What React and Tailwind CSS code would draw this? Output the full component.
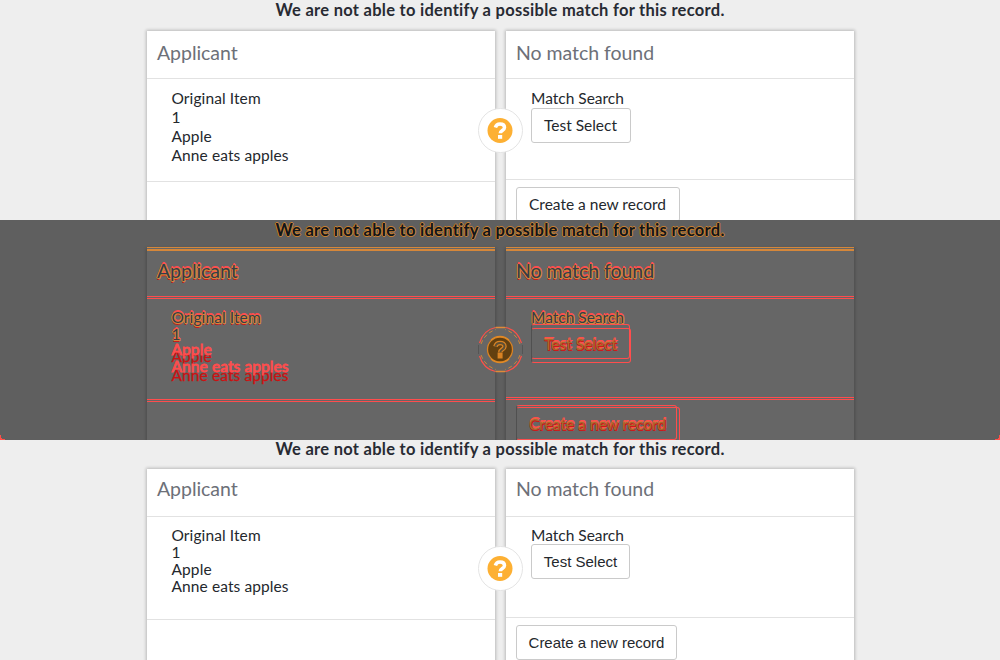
const sans = "font-[Lato,'Noto_Sans',sans-serif]";

const looks = {
  before: {
    bg: "bg-[#eeeeee]", title: "h-[21px] leading-[21px]", cards: "mt-[10px]", rows: "leading-[19px] pt-[10px]",
    head: "h-[47px] leading-[43px]", btn: sans + " text-[15.5px]", test: "w-[100px] pb-px pr-px", create: "w-[164px] pt-px pr-px", badge: "top-[108px]",
  },
  after: {
    bg: "bg-[#eeeeee]", title: "h-[18px] leading-[18px]", cards: "mt-[11px]", rows: "leading-[17px] pt-[10px]",
    head: "h-[47px] leading-[39px]", btn: "font-['Liberation_Sans',sans-serif] text-[15px]", test: "w-[99px]", create: "w-[161px] pt-px", badge: "top-[106px]",
  },
};

function Question({ diff }) {
  const hook = "M17.4 19.5c.6-2.4 2.2-3.6 4.6-3.6 2.7 0 4.5 1.4 4.5 3.5 0 3.1-4.2 3-4.2 5.8";
  if (diff) {
    return (
      <svg className="block" width="45" height="47" viewBox="0 0 45 47">
        <circle cx="22.5" cy="22.5" r="22" fill="#666666" fillOpacity="0.85" />
        <circle cx="22.5" cy="24.5" r="22" fill="#666666" />
        <g fill="none">
          <path d="M1.5 17C4 9 10 3 17.5 1.5M43.5 17C41 9 35 3 27.5 1.5M1.5 30C4 38 10 44 17.5 45.5M43.5 30C41 38 35 44 27.5 45.5" stroke="#ff5048" strokeWidth="1.2" />
          <path d="M3 18C5.500 11 11 5.500 18 3.500M42 18C39.500 11 34 5.500 27 3.500M3 29C5.500 36 11 41.500 18 43.500M42 29C39.500 36 34 41.500 27 43.500" stroke="#d08638" strokeDasharray="4 3" />
          <path d="M17.500 1.500h10M17.500 45.500h10" stroke="#e08a38" strokeWidth="1.500" />
          <path d="M.5 19v9M44.500 19v9" stroke="#555" />
        </g>
        <circle cx="22" cy="23.500" r="12.500" fill="#634010" stroke="#d98324" strokeWidth="1.300" />
        <path d="M13 14a13 13 0 0 1 18 0M13 33a13 13 0 0 0 18 0" fill="none" stroke="#e28a25" strokeWidth="1.200" />
        <path transform="translate(0 1)" d={hook} fill="none" stroke="#d98324" strokeWidth="4.500" />
        <path d="M19.600 26.500h5v6h-5z" fill="#d98324" />
        <path transform="translate(0 1)" d={hook} fill="none" stroke="#5e5036" strokeWidth="2" />
      </svg>
    );
  }
  return (
    <svg className="block" width="45" height="45" viewBox="0 0 45 45">
      <circle cx="22.5" cy="22.5" r="22" fill="#ffffff" stroke="#e4e4e4" />
      <circle cx="22" cy="22.5" r="12.5" fill="#fdb033" />
      <path d={hook} fill="none" stroke="#fff" strokeWidth="3.5" />
      <path d="M20 27h4.200v3.800H20z" fill="#fff" />
    </svg>
  );
}

function Snapshot({ kind }) {
  const k = looks[kind];
  const row = "text-[15.5px] text-[#24282d]";
  return (
    <section className={`relative h-[220px] overflow-hidden whitespace-nowrap ${sans} ${k.bg}`}>
      <h2 className={`text-center text-[16.5px] font-bold tracking-[0.28px] text-[#282b33] ${k.title}`}>We are not able to identify a possible match for this record.</h2>
      <div className={`flex gap-[11px] pl-[147px] ${k.cards}`}>
        <article className="h-[240px] w-[348px] bg-white shadow-[0_0_3px_1px_rgba(0,0,0,0.22)]">
          <h3 className={`box-content border-b border-[#e2e2e2] pl-[10px] text-[19.5px] tracking-[-0.04px] text-[#6d7078] ${k.head}`}>Applicant</h3>
          <div className={`h-[103px] border-b border-[#e2e2e2] pl-[24.5px] tracking-[0.1px] ${row} ${k.rows}`}>
            <p>Original Item</p>
            <p>1</p>
            <p>Apple</p>
            <p>Anne eats apples</p>
          </div>
        </article>
        <article className="h-[240px] w-[348px] bg-white shadow-[0_0_3px_1px_rgba(0,0,0,0.22)]">
          <h3 className={`box-content border-b border-[#e2e2e2] pl-[10px] text-[19.5px] tracking-[-0.04px] text-[#6d7078] ${k.head}`}>No match found</h3>
          <div className={`h-[101px] border-b border-[#e2e2e2] pl-[25px] ${row} ${k.rows}`}>
            <p>Match Search</p>
            <button className={`block h-[35px] rounded-[3px] border border-[#cacaca] bg-white ${k.btn} ${k.test}`}>Test Select</button>
          </div>
          <div className="pt-[7px] pl-[10px]">
            <button className={`block h-[35px] rounded-[3px] border border-[#cacaca] bg-white text-[#24282d] ${k.btn} ${k.create}`}>Create a new record</button>
          </div>
        </article>
      </div>
      <div className={`absolute left-[478px] ${k.badge}`}><Question /></div>
    </section>
  );
}

/* Changed text whose two positions nearly coincide: dark common part, coloured fringes. */
function Fringe({ children, strong }) {
  return (
    <span className={strong
      ? "text-[#a5692c] [text-shadow:0_1px_#cc1a1a,1px_1px_#cc1a1a,0_-1px_#e8683f,0_-2px_#ff4d4d,1px_-2px_#ff4d4d]"
      : "text-[#353b48] [text-shadow:0_1px_#d5873a,1px_1px_#d5873a,-1px_0_#d5873a,1px_0_#d5873a,0_-1px_#ff4d4d,1px_-1px_#ff4d4d,0_-2px_#ff4d4d,0_2px_#cc1a1a]"}
    >{children}</span>
  );
}

function Rules() {
  return (
    <div>
      <div className="h-px bg-[#ff4d4d]" />
      <div className="h-px" />
      <div className="h-px bg-[#ff4d4d]" />
    </div>
  );
}

function TopEdge() {
  return (
    <div>
      <div className="h-px bg-[#d5873a]" />
      <div className="h-px" />
      <div className="h-[2px] bg-[#d5873a]" />
    </div>
  );
}

/* Changed text that moved far enough for both positions to be legible. */
function Moved({ children, up }) {
  return (
    <div className="grid">
      <span className="text-[#cc1212] [-webkit-text-stroke:0.3px_#cc1212] [grid-area:1/1]">{children}</span>
      <span aria-hidden="true" className={`text-[#ff4d4d] [-webkit-text-stroke:0.8px_#ff4d4d] [grid-area:1/1] ${up}`}>{children}</span>
    </div>
  );
}

function Difference() {
  const card = "h-[240px] w-[348px] bg-[#666666] shadow-[0_2px_3px_1px_rgba(0,0,0,0.2)]";
  const head = "h-[45px] pl-[10px] text-[19.5px] leading-[39px] tracking-[-0.04px]";
  return (
    <section className={`relative h-[220px] overflow-hidden bg-[#5f5f5f] whitespace-nowrap ${sans}`}>
      <h2 className="h-[21px] text-center text-[16.5px] leading-[21px] font-bold tracking-[0.28px] text-[#11151b] [text-shadow:-1px_0_#c9802f,1px_0_#c9802f,0_-1px_#c9802f,0_1px_#c9802f]">We are not able to identify a possible match for this record.</h2>
      <div className="mt-[6px] flex gap-[11px] pl-[147px]">
        <article className={card}>
          <TopEdge />
          <h3 className={head}><Fringe>Applicant</Fringe></h3>
          <Rules />
          <div className="flex h-[100px] flex-col items-start pt-[9px] pl-[24.5px] text-[15.5px] leading-[19px] tracking-[0.1px]">
            <Fringe>Original Item</Fringe>
            <div className="mb-[3px] h-[17px] leading-[15px]"><Fringe>1</Fringe></div>
            <Moved up="-translate-y-[7px]">Apple</Moved>
            <Moved up="-translate-y-[9px]">Anne eats apples</Moved>
          </div>
          <Rules />
        </article>
        <article className={card}>
          <TopEdge />
          <h3 className={head}><Fringe>No match found</Fringe></h3>
          <Rules />
          <div className="h-[98px] pt-[9px] pl-[25px] text-[15.5px] leading-[19px]">
            <div className="h-[20px]"><Fringe>Match Search</Fringe></div>
            <div className="relative h-[35px] w-[100px] rounded-[3px] border border-[#ff4d4d] border-l-[#505050] pr-px text-center leading-[31px]">
              <div className="absolute -top-[5px] -left-px h-[35px] w-[99px] rounded-[3px] border border-[#ff4d4d] border-l-[#505050]" />
              <Fringe strong>Test Select</Fringe>
            </div>
          </div>
          <Rules />
          <div className="pt-[7px] pl-[10px]">
            <div className="relative h-[35px] w-[164px] rounded-[3px] border border-[#ff4d4d] border-l-[#505050] pr-px text-center text-[15.5px] leading-[32px]">
              <div className="absolute -top-[3px] -left-px h-[35px] w-[161px] rounded-[3px] border border-[#ff4d4d] border-l-[#505050]" />
              <Fringe strong>Create a new record</Fringe>
            </div>
          </div>
        </article>
      </div>
      <div className="absolute top-[106px] left-[478px]"><Question diff /></div>
      <svg className="absolute bottom-0 left-0" width="5" height="5" viewBox="0 0 5 5"><path d="M0 0h1v3h1v1h3v1H0z" fill="#ff5048" /></svg>
      <svg className="absolute right-0 bottom-0" width="5" height="5" viewBox="0 0 5 5"><path d="M5 0H4v3H3v1H0v1h5z" fill="#ff5048" /></svg>
    </section>
  );
}

export default function App() {
  return (
    <main className="w-[1000px]">
      <Snapshot kind="before" />
      <Difference />
      <Snapshot kind="after" />
    </main>
  );
}
